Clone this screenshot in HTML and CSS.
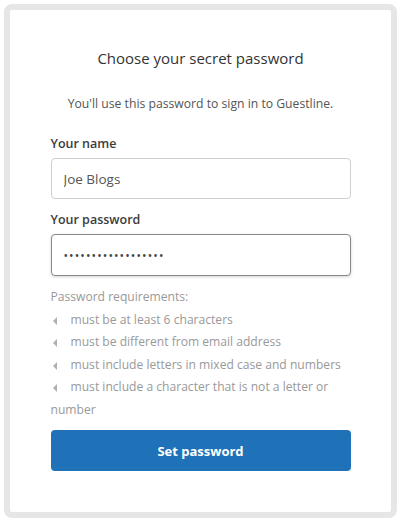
FILE: index.html
```html
<!DOCTYPE html>
<html lang="en">
<head>
<meta charset="utf-8">
<title>Choose your secret password</title>
<link rel="stylesheet" href="styles.css">
</head>
<body>
<div class="frame">
  <form class="card">
    <h1 class="title">Choose your secret password</h1>
    <p class="subtitle">You'll use this password to sign in to Guestline.</p>
    <label class="label" for="name">Your name</label>
    <input class="field" id="name" type="text" value="Joe Blogs">
    <label class="label label-gap" for="pw">Your password</label>
    <input class="field field-focus" id="pw" type="password" value="abcdefghijklmnopqr">
    <div class="reqs">
      <div>Password requirements:</div>
      <div class="req"><span class="tri"></span>must be at least 6 characters</div>
      <div class="req"><span class="tri"></span>must be different from email address</div>
      <div class="req"><span class="tri"></span>must include letters in mixed case and numbers</div>
      <div class="req"><span class="tri"></span>must include a character that is not a letter or number</div>
    </div>
    <button class="btn" type="button">Set password</button>
  </form>
</div>
</body>
</html>
```
FILE: styles.css
```css
html, body {
  margin: 0;
  padding: 0;
  background: #ffffff;
}
body {
  padding: 4px;
  font-family: "Open Sans", "Noto Sans", sans-serif;
}
.frame {
  border: 6px solid #e6e6e6;
  border-radius: 8px;
  background: #fff;
}
.card {
  width: 300px;
  margin: 0 auto;
  padding: 36px 0 41px;
  display: flex;
  flex-direction: column;
}
.title {
  margin: 0;
  font-size: 15px;
  line-height: 24px;
  font-weight: 400;
  color: #333;
  text-align: center;
}
.subtitle {
  margin: 24px 0 0;
  font-size: 12.2px;
  line-height: 20px;
  color: #555;
  text-align: center;
}
.label {
  margin-top: 20px;
  margin-bottom: 4px;
  font-size: 12.5px;
  line-height: 20px;
  font-weight: 600;
  color: #3c3c3c;
}
.label-gap {
  margin-top: 11px;
}
.field {
  box-sizing: border-box;
  height: 41px;
  width: 100%;
  margin: 0;
  padding: 0 12px;
  border: 1px solid #cfcfcf;
  border-radius: 4px;
  font-family: inherit;
  font-size: 13.5px;
  color: #555;
  background: #fff;
  outline: none;
}
.field-focus {
  height: 42px;
  border-color: #8a8a8a;
  box-shadow: 0 1px 3px rgba(0,0,0,0.18);
  font-size: 12px;
  letter-spacing: 1.1px;
  color: #444;
}
.reqs {
  margin-top: 10px;
  font-size: 12.1px;
  line-height: 22.5px;
  color: #999;
}
.tri {
  display: inline-block;
  width: 0;
  height: 0;
  border-top: 4px solid transparent;
  border-bottom: 4px solid transparent;
  border-right: 4px solid #b0b0b0;
  margin: 0 14px 0 2px;
  vertical-align: -1px;
}
.btn {
  margin-top: 9px;
  height: 41px;
  width: 100%;
  border: none;
  border-radius: 4px;
  background: #1f72b8;
  color: #fff;
  font-family: inherit;
  font-size: 13px;
  font-weight: 700;
  cursor: pointer;
}
```
